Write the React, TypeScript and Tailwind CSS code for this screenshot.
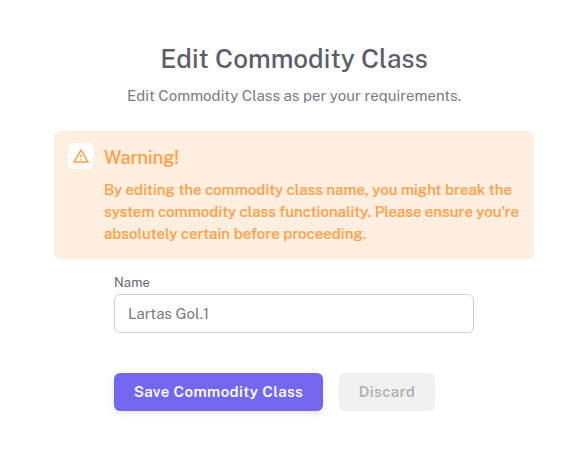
import { useState } from 'react'

function WarningIcon() {
  return (
    <svg className="h-[18px] w-[18px]" viewBox="0 0 24 24" fill="currentColor">
      <path d="M12 2 1 21h22M12 6l7.53 13H4.47M11 10v4h2v-4m-2 6v2h2v-2" />
    </svg>
  )
}

export default function App() {
  const [name, setName] = useState('Lartas Gol.1')

  return (
    <div className="h-[452px] w-[588px] bg-white px-[54px] pt-[41px] font-['Public_Sans','Inter','Liberation_Sans',sans-serif] text-[15px] leading-[22px] text-[#7b7986]">
      <div className="text-center">
        <h3 className="mb-2 text-[26px] leading-9 font-medium text-[#5f5d6b]">
          Edit Commodity Class
        </h3>
        <p>Edit Commodity Class as per your requirements.</p>
      </div>

      <div className="mt-6 flex h-32 gap-[10px] rounded-md bg-[#ffefe1] px-[14px] pt-3 text-[#ffa24a]">
        <span className="flex h-[26px] w-[26px] shrink-0 items-center justify-center rounded-md bg-white">
          <WarningIcon />
        </span>
        <div>
          <h5 className="mb-[9px] pt-[3px] text-lg leading-6 font-medium [-webkit-text-stroke:0.2px]">
            Warning!
          </h5>
          <p className="w-[420px] font-medium whitespace-nowrap [-webkit-text-stroke:0.2px]">
            By editing the commodity class name, you might break the
            <br />
            system commodity class functionality. Please ensure you&apos;re
            <br />
            absolutely certain before proceeding.
          </p>
        </div>
      </div>

      <form className="mx-[60px] mt-4" onSubmit={(e) => e.preventDefault()}>
        <label
          className="mb-1 block text-[13px] leading-[15px] tracking-[0.1px] text-[#686575]"
          htmlFor="name"
        >
          Name
        </label>
        <input
          id="name"
          className="block h-[39px] w-full rounded-md border border-[#d0cfd2] px-[13px] text-[15px] outline-none"
          value={name}
          onChange={(e) => setName(e.target.value)}
        />
        <div className="mt-10 flex gap-4 font-semibold tracking-[0.38px]">
          <button className="h-[38px] w-[209px] rounded-md bg-[#7367f0] text-white shadow-[0_2px_6px_rgba(165,163,174,0.3)]">
            Save Commodity Class
          </button>
          <button className="h-[38px] w-24 rounded-md bg-[#f1f1f1] text-[#b1b2b4]">
            Discard
          </button>
        </div>
      </form>
    </div>
  )
}
